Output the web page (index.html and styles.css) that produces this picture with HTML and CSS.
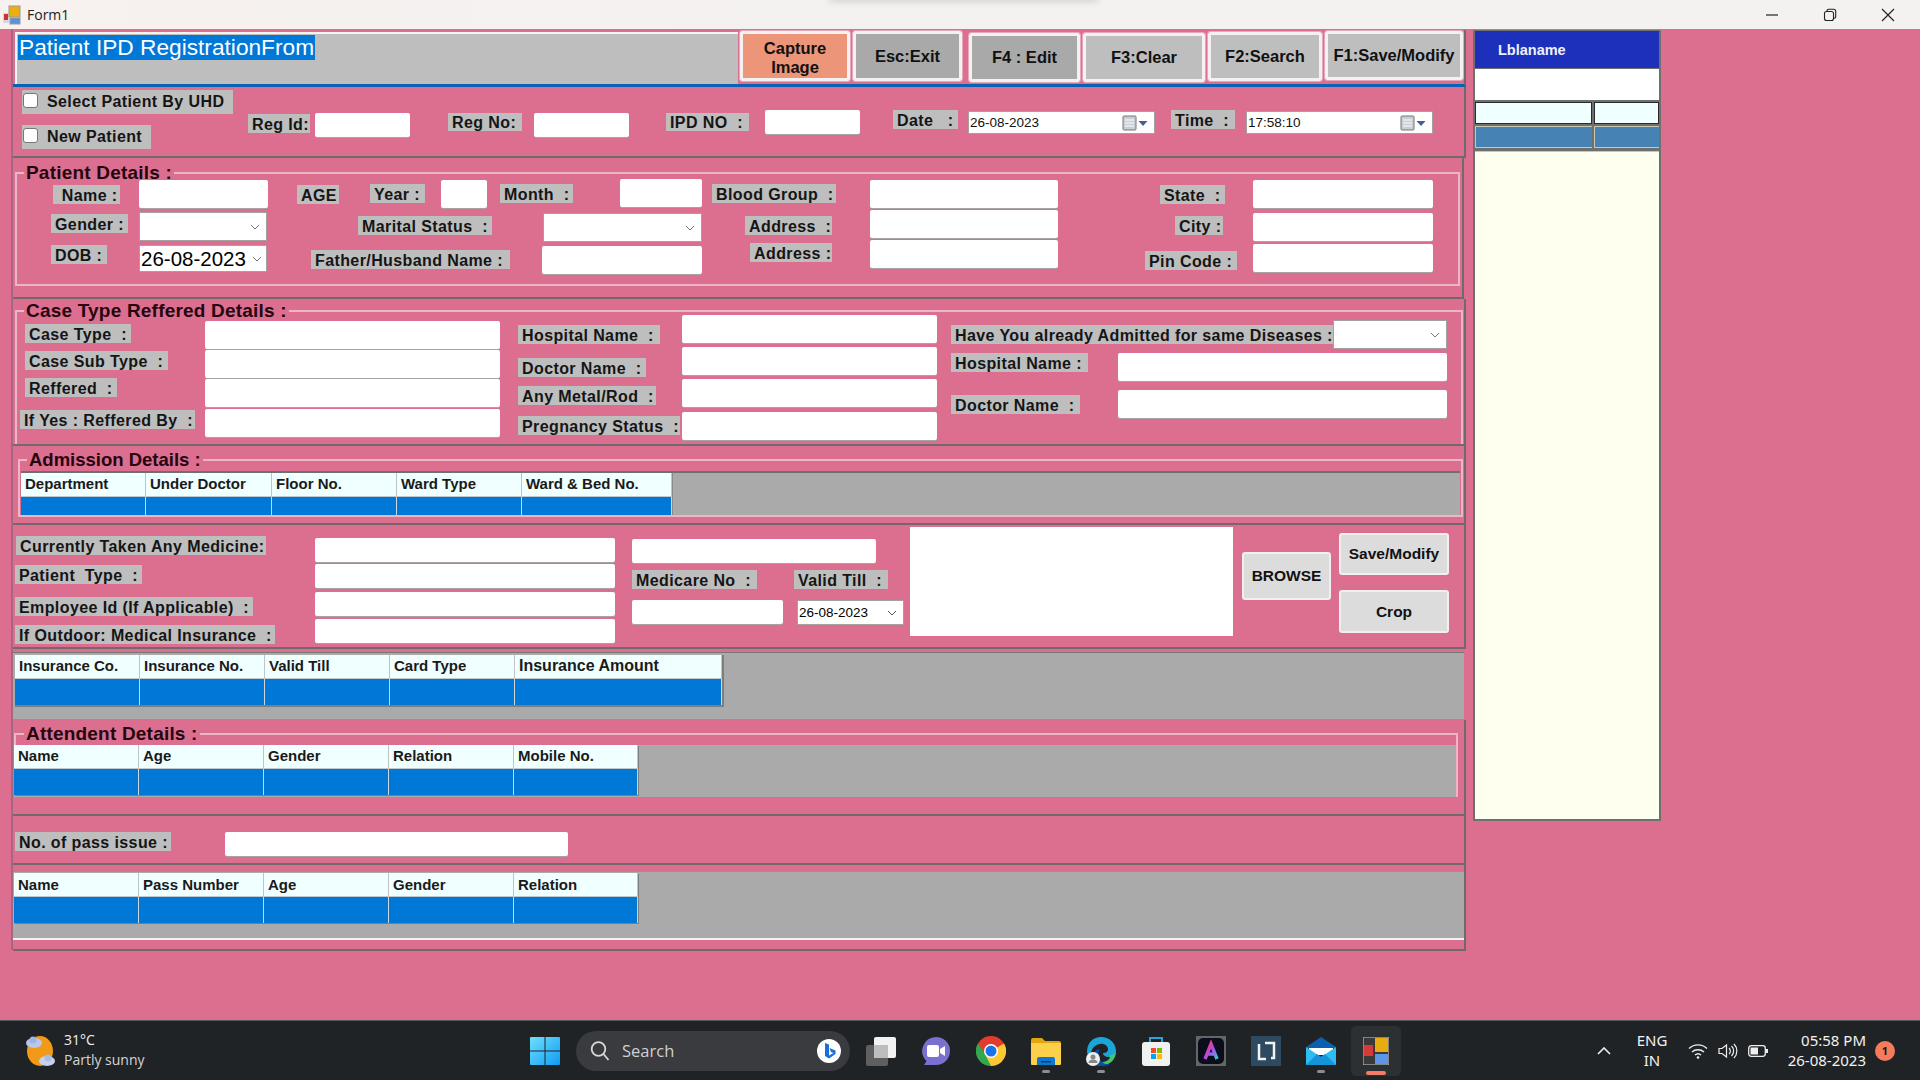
FILE: index.html
```html
<!DOCTYPE html>
<html lang="en">
<head>
<meta charset="utf-8">
<title>Form1</title>
<link rel="stylesheet" href="styles.css">
</head>
<body>
<header class="titlebar">
  <svg class="app-ico" width="18" height="20" viewBox="0 0 18 20"><rect x="0" y="8" width="6" height="10" fill="#d8d8d8"/><rect x="1" y="9" width="4" height="6" fill="#d03030"/><rect x="6" y="1" width="11" height="11" fill="#e8b010" stroke="#999"/><rect x="7" y="13" width="10" height="6" fill="#5a90e0" stroke="#999"/></svg>
  <span class="title-text">Form1</span>
  <div class="win-ctl">
    <svg width="14" height="14" viewBox="0 0 14 14"><path d="M1 7h12" stroke="#222" stroke-width="1.2"/></svg>
    <svg width="14" height="14" viewBox="0 0 14 14"><rect x="1.5" y="3.5" width="9" height="9" rx="2" fill="none" stroke="#222" stroke-width="1.1"/><path d="M4 3V2.8a1.5 1.5 0 0 1 1.5-1.5h5.2a2 2 0 0 1 2 2v5.4a1.5 1.5 0 0 1-1.5 1.5" fill="none" stroke="#222" stroke-width="1.1"/></svg>
    <svg width="14" height="14" viewBox="0 0 14 14"><path d="M1 1l12 12M13 1L1 13" stroke="#222" stroke-width="1.2"/></svg>
  </div>
</header>

<div class="form">
  <main class="main">
    <section class="head">
      <div class="head-title"><span class="selected">Patient IPD RegistrationFrom</span></div>
      <button class="btn b-capture">Capture<br>Image</button>
      <button class="btn b-exit">Esc:Exit</button>
      <button class="btn b-edit">F4 : Edit</button>
      <button class="btn b-clear">F3:Clear</button>
      <button class="btn b-search">F2:Search</button>
      <button class="btn b-save">F1:Save/Modify</button>
    </section>

    <section class="panel p-reg">
      <div class="checks">
        <label class="lbl chk-lbl t3 w211"><input type="checkbox" class="chk">Select Patient By UHD</label>
        <label class="lbl chk-lbl t11 w129"><input type="checkbox" class="chk">New Patient</label>
      </div>
      <span class="lbl t27 w62">Reg Id:</span><input class="in s t26 w95">
      <span class="lbl t26 w74 h18">Reg No:</span><input class="in s t26 w95">
      <span class="lbl t26 w83 h18">IPD NO &nbsp;:</span><input class="in s t23 w95">
      <span class="lbl t23 w65">Date &nbsp; :</span>
      <div class="dtp t24 w187"><span>26-08-2023</span><svg width="26" height="16" viewBox="0 0 26 16"><rect x="1" y="1" width="13" height="14" rx="1" fill="#c9ced4" stroke="#777"/><path d="M3 5h9M3 8h9M3 11h9" stroke="#fff"/><path d="M16.500 6h9l-4.500 5z" fill="#44608c"/></svg></div>
      <span class="lbl t23 w64">Time &nbsp;:</span>
      <div class="dtp t24 w187"><span>17:58:10</span><svg width="26" height="16" viewBox="0 0 26 16"><rect x="1" y="1" width="13" height="14" rx="1" fill="#c9ced4" stroke="#777"/><path d="M3 5h9M3 8h9M3 11h9" stroke="#fff"/><path d="M16.500 6h9l-4.500 5z" fill="#44608c"/></svg></div>
    </section>

    <section class="panel p-patient">
      <div class="group g-patient">
        <h2 class="legend">Patient Details :</h2>
        <div class="row r1">
          <span class="lbl t6 w67">&nbsp;Name :</span><input class="in t1 w129">
          <span class="lbl t6 w42">AGE</span>
          <span class="lbl t5 w55">Year :</span><input class="in t1 w46">
          <span class="lbl t5 w73">Month &nbsp;:</span><input class="in w82">
          <span class="lbl t5 w124">Blood Group &nbsp;:</span><input class="in t1 w188">
          <span class="lbl t6 w65">State &nbsp;:</span><input class="in t1 w180">
        </div>
        <div class="row r2">
          <span class="lbl t4 w77">Gender :</span>
          <div class="combo t2 w128"><svg width="10" height="6" viewBox="0 0 10 6"><path d="M1 1l4 4 4-4" fill="none" stroke="#777"/></svg></div>
          <span class="lbl t6 w134">Marital Status &nbsp;:</span>
          <div class="combo t3 w159"><svg width="10" height="6" viewBox="0 0 10 6"><path d="M1 1l4 4 4-4" fill="none" stroke="#777"/></svg></div>
          <span class="lbl t6 w87">Address &nbsp;:</span><input class="in w188">
          <span class="lbl t6 w48">City :</span><input class="in t3 w180">
        </div>
        <div class="row r3">
          <span class="lbl t5 w56">DOB :</span>
          <div class="combo dob t5 w128"><span>26-08-2023</span><svg width="10" height="6" viewBox="0 0 10 6"><path d="M1 1l4 4 4-4" fill="none" stroke="#777"/></svg></div>
          <span class="lbl t10 w199">Father/Husband Name :</span><input class="in t6 w160">
          <span class="lbl t3 w82">Address :</span><input class="in w188">
          <span class="lbl t11 w92">Pin Code :</span><input class="in t4 w180">
        </div>
      </div>
    </section>

    <section class="panel p-case">
      <div class="group g-case">
        <h2 class="legend">Case Type Reffered Details :</h2>
        <div class="case-cols">
          <div class="stack">
            <span class="lbl t12 ml5 w106">Case Type &nbsp;:</span>
            <span class="lbl t8 ml5 w143">Case Sub Type &nbsp;:</span>
            <span class="lbl t8 ml5 w92">Reffered &nbsp;:</span>
            <span class="lbl t13 w175">If Yes : Reffered By &nbsp;:</span>
          </div>
          <div class="stack">
            <input class="in t9 w295"><input class="in t1 w295"><input class="in t1 w295"><input class="in t2 w295">
          </div>
          <div class="stack">
            <span class="lbl t13 w142">Hospital Name &nbsp;:</span>
            <span class="lbl t14 w128">Doctor Name &nbsp;:</span>
            <span class="lbl t9 w138">Any Metal/Rod &nbsp;:</span>
            <span class="lbl t11 w162">Pregnancy Status &nbsp;:</span>
          </div>
          <div class="stack">
            <input class="in t3 w255"><input class="in t4 w255"><input class="in t4 w255"><input class="in t5 w255">
          </div>
          <div class="stack">
            <div class="case-row cr1"><span class="lbl t13 w382">Have You already Admitted for same Diseases :</span><div class="combo t8 w114"><svg width="10" height="6" viewBox="0 0 10 6"><path d="M1 1l4 4 4-4" fill="none" stroke="#777"/></svg></div></div>
            <div class="case-row cr2"><span class="lbl w137">Hospital Name :</span><input class="in w329 ml30"></div>
            <div class="case-row"><span class="lbl t5 w129">Doctor Name &nbsp;:</span><input class="in w329 ml38"></div>
          </div>
        </div>
      </div>
    </section>

    <section class="panel p-adm">
      <div class="group g-adm">
        <h2 class="legend">Admission Details :</h2>
        <div class="dg dg-adm">
          <div class="tbl adm-tbl">
            <div class="th">Department</div><div class="th">Under Doctor</div><div class="th">Floor No.</div><div class="th">Ward Type</div><div class="th">Ward &amp; Bed No.</div>
            <div class="td"></div><div class="td"></div><div class="td"></div><div class="td"></div><div class="td"></div>
          </div>
        </div>
      </div>
    </section>

    <section class="panel p-med">
      <div class="stack">
        <span class="lbl t11 ml1 w250">Currently Taken Any Medicine:</span>
        <span class="lbl t10 w127">Patient &nbsp;Type &nbsp;:</span>
        <span class="lbl t13 w238">Employee Id (If Applicable) &nbsp;:</span>
        <span class="lbl t9 w260">If Outdoor: Medical Insurance &nbsp;:</span>
      </div>
      <div class="stack">
        <input class="in s t13 w300"><input class="in s t2 w300"><input class="in s t4 w300"><input class="in s t3 w300">
      </div>
      <div class="stack">
        <input class="in s t14 w244">
        <div class="case-row t7"><span class="lbl w125">Medicare No &nbsp;:</span><span class="lbl w94 ml37">Valid Till &nbsp;:</span></div>
        <div class="case-row t11"><input class="in s w151"><div class="combo small ml14 w107"><span>26-08-2023</span><svg width="10" height="6" viewBox="0 0 10 6"><path d="M1 1l4 4 4-4" fill="none" stroke="#555"/></svg></div></div>
      </div>
      <div class="photo t2"></div>
      <button class="btn2 b-browse t27">BROWSE</button>
      <div class="stack">
        <button class="btn2 b-sm t8">Save/Modify</button>
        <button class="btn2 b-crop t15">Crop</button>
      </div>
    </section>

    <section class="p-ins">
      <div class="dg dg-ins">
        <div class="tbl ins-tbl">
          <div class="th">Insurance Co.</div><div class="th">Insurance No.</div><div class="th">Valid Till</div><div class="th">Card Type</div><div class="th th-lg">Insurance Amount</div>
          <div class="td"></div><div class="td"></div><div class="td"></div><div class="td"></div><div class="td"></div>
        </div>
      </div>
    </section>

    <section class="panel p-att">
      <div class="group g-att">
        <h2 class="legend">Attendent Details :</h2>
        <div class="dg dg-att">
          <div class="tbl std-tbl">
            <div class="th">Name</div><div class="th">Age</div><div class="th">Gender</div><div class="th">Relation</div><div class="th">Mobile No.</div>
            <div class="td"></div><div class="td"></div><div class="td"></div><div class="td"></div><div class="td"></div>
          </div>
        </div>
      </div>
    </section>

    <section class="panel p-pass">
      <span class="lbl t16 w156">No. of pass issue :</span>
      <input class="in s t16 w343">
    </section>

    <section class="panel p-last">
      <div class="dg dg-last">
        <div class="tbl std-tbl">
          <div class="th">Name</div><div class="th">Pass Number</div><div class="th">Age</div><div class="th">Gender</div><div class="th">Relation</div>
          <div class="td"></div><div class="td"></div><div class="td"></div><div class="td"></div><div class="td"></div>
        </div>
      </div>
    </section>
  </main>

  <aside class="side">
    <div class="side-head">Lblaname</div>
    <div class="side-white"></div>
    <div class="side-grid">
      <div class="sg-h"></div><div class="sg-h"></div>
      <div class="sg-d"></div><div class="sg-d"></div>
    </div>
    <div class="side-cream"></div>
  </aside>
</div>

<footer class="taskbar">
  <div class="weather">
    <svg width="30" height="30" viewBox="0 0 30 30"><ellipse cx="15" cy="15" rx="13" ry="15" fill="#f09a18"/><ellipse cx="9" cy="7" rx="8" ry="5" fill="#b8c8ec"/><circle cx="8" cy="4" r="3.500" fill="#9fb4e0"/><ellipse cx="22" cy="25" rx="8" ry="5" fill="#c4d2f0"/><circle cx="23" cy="22" r="3.500" fill="#a8bce4"/></svg>
    <div class="w-text"><span>31°C</span><span class="w-sub">Partly sunny</span></div>
  </div>
  <svg class="winlogo" width="30" height="30" viewBox="0 0 30 30"><defs><linearGradient id="wg" x1="0" y1="0" x2="1" y2="1"><stop offset="0" stop-color="#6fe0fa"/><stop offset="1" stop-color="#0f9bf5"/></linearGradient></defs><path d="M1 1h13.500v13.500H0V2a1 1 0 0 1 1-1zM15.500 1H29a1 1 0 0 1 1 1v12.500H15.500zM0 15.500h14.500V29H1a1 1 0 0 1-1-1zM15.500 15.500H30V28a1 1 0 0 1-1 1H15.500z" fill="url(#wg)"/></svg>
  <div class="searchbox">
    <svg width="20" height="22" viewBox="0 0 20 22"><circle cx="8.500" cy="9" r="6.800" fill="none" stroke="#d8d8d8" stroke-width="1.800"/><path d="M13.500 14l5 6" stroke="#d8d8d8" stroke-width="1.800"/></svg>
    <span>Search</span>
    <svg class="bing" width="26" height="26" viewBox="0 0 26 26"><circle cx="13" cy="13" r="12" fill="#fff"/><path d="M9 5l4 1.500v11l4.500-2.500-2.500-1-1.500-4 6 2.500v3.500L13 20.500 9 18z" fill="#1b6fd8"/></svg>
  </div>
  <div class="apps">
    <div class="app"><svg width="30" height="30" viewBox="0 0 30 30"><rect x="0" y="9" width="22" height="21" rx="2" fill="#5f5f5f"/><rect x="8" y="1" width="22" height="21" rx="2" fill="#f2f2f2"/><rect x="8" y="9" width="14" height="13" fill="#bdbdbd"/></svg></div>
    <div class="app"><svg width="30" height="30" viewBox="0 0 30 30"><path d="M15 1a14 14 0 0 1 0 28H3l2.500-4A14 14 0 0 1 15 1z" fill="#7b6fd0"/><rect x="6" y="9" width="12" height="12" rx="2" fill="#fff"/><path d="M19 13l5-3v10l-5-3z" fill="#fff"/></svg></div>
    <div class="app"><svg width="30" height="30" viewBox="0 0 30 30"><circle cx="15" cy="15" r="15" fill="#e33b2e"/><path d="M15 15l13-7.500A15 15 0 0 1 15 30L8 22z" fill="#fcc934"/><path d="M2 7.500L9 18l6 12A15 15 0 0 1 2 7.500z" fill="#2fa84f"/><circle cx="15" cy="15" r="7" fill="#fff"/><circle cx="15" cy="15" r="5.500" fill="#1a73e8"/></svg></div>
    <div class="app has-dot"><svg width="30" height="30" viewBox="0 0 30 30"><path d="M0 4a2 2 0 0 1 2-2h9l3 3h14a2 2 0 0 1 2 2v3H0z" fill="#e2a50c"/><path d="M0 7h30v21a1 1 0 0 1-1 1H1a1 1 0 0 1-1-1z" fill="#fdd04b"/><path d="M6 29v-6a2 2 0 0 1 2-2h14a2 2 0 0 1 2 2v6z" fill="#0d78d0"/><rect x="10" y="25" width="10" height="1.500" fill="#083e70"/></svg></div>
    <div class="app has-dot"><svg width="30" height="30" viewBox="0 0 30 30"><path d="M1 16C1 6 8 1 15 1c8 0 15 6 15 14 0 4-3 6-7 6s-6-2-6-4c3 0 5-1 5-4 0-3-4-6-8-5-7 1-10 7-9 14-3-2-4-4-4-7z" fill="#1ca6d8"/><path d="M30 15c0 6-3 11-8 13-4 1-7 1-9-2 4 1 12-1 11-7 3 0 6-2 6-4z" fill="#46c66c"/><path d="M5 26c0-6 3-12 9-13-2 3-2 8 1 12s7 3 9 3c-5 3-14 4-19-2z" fill="#0a4fa0"/><circle cx="7" cy="23" r="7" fill="#f0f0f0"/><circle cx="7" cy="21" r="2.500" fill="#888"/><path d="M2.500 27a4.500 3.500 0 0 1 9 0z" fill="#888"/></svg></div>
    <div class="app"><svg width="28" height="30" viewBox="0 0 28 30"><path d="M8 7V2h12v5" fill="none" stroke="#25a5d8" stroke-width="2"/><rect x="0" y="6" width="28" height="24" rx="3" fill="#f1f1f1"/><rect x="9" y="12" width="5" height="5" fill="#f25022"/><rect x="15" y="12" width="5" height="5" fill="#7fba00"/><rect x="9" y="18" width="5" height="5" fill="#00a4ef"/><rect x="15" y="18" width="5" height="5" fill="#ffb900"/></svg></div>
    <div class="app"><svg width="30" height="30" viewBox="0 0 30 30"><defs><linearGradient id="ag" x1="0" y1="0" x2="1" y2="1"><stop offset="0" stop-color="#f53a6c"/><stop offset=".5" stop-color="#b04be8"/><stop offset="1" stop-color="#2bd0c8"/></linearGradient></defs><rect width="30" height="30" fill="#666"/><rect x="2" y="2" width="26" height="26" rx="5" fill="#0a0d1c"/><path d="M9 23l6-15 6 15M11.500 18h7" fill="none" stroke="url(#ag)" stroke-width="3.500"/></svg></div>
    <div class="app"><svg width="30" height="30" viewBox="0 0 30 30"><rect width="30" height="30" fill="#2d4a60"/><path d="M8 8v15h7" fill="none" stroke="#f2f2f2" stroke-width="2.500"/><path d="M14 7h9v15h-3" fill="none" stroke="#f2f2f2" stroke-width="2.500"/></svg></div>
    <div class="app has-dot"><svg width="30" height="30" viewBox="0 0 30 30"><path d="M0 11L15 1l15 10v1H0z" fill="#0b5fb0"/><path d="M3 12h24v7H3z" fill="#fff"/><path d="M0 11l15 10 15-10v18H0z" fill="#2fbcf0"/><path d="M0 29l11-11 4 3 4-3 11 11z" fill="#1594dc"/></svg></div>
    <div class="app active"><svg width="26" height="28" viewBox="0 0 26 28"><rect x="0" y="0" width="26" height="28" fill="#3a3a3a" stroke="#ccc"/><rect x="12" y="1" width="13" height="14" fill="#e8ac10"/><rect x="12" y="17" width="13" height="10" fill="#5b96e8"/><rect x="1" y="8" width="9" height="11" fill="#d83a3a"/></svg></div>
  </div>
  <div class="tray">
    <svg class="chev" width="14" height="8" viewBox="0 0 14 8"><path d="M1 7l6-6 6 6" fill="none" stroke="#eee" stroke-width="1.600"/></svg>
    <div class="lang"><span>ENG</span><span>IN</span></div>
    <svg class="wifi" width="20" height="16" viewBox="0 0 20 16"><path d="M1 5.500a13 13 0 0 1 18 0M4 9a9 9 0 0 1 12 0M7 12a4.500 4.500 0 0 1 6 0" fill="none" stroke="#eee" stroke-width="1.400"/><circle cx="10" cy="14.500" r="1.300" fill="#eee"/></svg>
    <svg class="vol" width="20" height="16" viewBox="0 0 20 16"><path d="M1 5.500h3L8.500 2v12L4 10.500H1z" fill="none" stroke="#eee" stroke-width="1.200"/><path d="M11 5a4 4 0 0 1 0 6M13.500 3a7 7 0 0 1 0 10M16 1a10 10 0 0 1 0 14" fill="none" stroke="#eee" stroke-width="1.200"/></svg>
    <svg class="batt" width="20" height="12" viewBox="0 0 20 12"><rect x=".7" y=".7" width="16.600" height="10.600" rx="2.500" fill="none" stroke="#eee" stroke-width="1.300"/><rect x="2.500" y="2.500" width="7.500" height="7" fill="#eee"/><rect x="18" y="4" width="2" height="4" fill="#eee"/></svg>
    <div class="clock"><span>05:58 PM</span><span>26-08-2023</span></div>
    <span class="badge">1</span>
  </div>
</footer>
</body>
</html>
```

FILE: styles.css
```css
* { box-sizing: border-box; }
html, body { margin: 0; padding: 0; }
body { width: 1920px; height: 1080px; overflow: hidden; font-family: "Liberation Sans", Arial, sans-serif; background: #dc6e90; }

/* title bar */
.titlebar { position: relative; height: 29px; background: linear-gradient(90deg, #f7f1ef, #f3f2f1 50%); display: flex; align-items: center; padding-left: 3px; }
.titlebar::before { content: ""; position: absolute; left: 830px; top: -6px; width: 268px; height: 6px; box-shadow: 0 0 8px rgba(0,0,0,.22); }
.title-text { margin-left: 6px; font: 14px "Open Sans", sans-serif; color: #222; }
.win-ctl { margin-left: auto; margin-right: 25px; display: flex; gap: 44px; }

/* layout */
.form { display: flex; height: 991px; background: #dc6e90; }
.main { width: 1455px; margin-left: 11px; border-left: 2px solid #a3687f; height: 921px; padding-top: 1px; }
.panel { border-right: 2px solid #6f6a6c; border-bottom: 2px solid #6f6a6c; }

/* header */
.head { display: flex; align-items: flex-start; height: 57px; width: 1453px; border-bottom: 3px solid #0a62b5; border-right: 2px solid #6f6a6c; }
.head-title { margin: 2px 0 0 2px; width: 723px; height: 52px; background: #bebebe; border-left: 2px solid #f4f4f4; border-top: 2px solid #f4f4f4; padding: 1px; }
.selected { display: inline-block; height: 25px; line-height: 25px; padding: 0 1px; background: #0078d7; color: #fff; font-size: 22.700px; white-space: nowrap; }
.btn { border: 3px solid #f5f1f2; outline: 1px solid #e6a9bc; border-radius: 2px; background: #bebebe; color: #111; font: bold 16.500px/23px "Liberation Sans", sans-serif; padding: 0; height: 49px; white-space: nowrap; }
.b-capture { margin: 1px 0 0 2px; width: 110px; height: 50px; background: #ec9578; line-height: 19px; padding-top: 3px; }
.b-exit { margin: 1px 0 0 3px; width: 109px; height: 50px; background: #a9a9a9; }
.b-edit { margin: 3px 0 0 7px; width: 111px; background: #a9a9a9; }
.b-clear { margin: 3px 0 0 3px; width: 122px; }
.b-search { margin: 2px 0 0 3px; width: 114px; }
.b-save { margin: 1px 0 0 3px; width: 138px; }

/* generic controls */
.lbl { display: block; height: 19px; line-height: 21px; background: #bebebe; color: #151515; font-weight: bold; font-size: 16px; letter-spacing: .4px; padding-left: 4px; white-space: nowrap; overflow: hidden; flex: none; }
.h18 { height: 18px; line-height: 19px; }
.in { display: block; position: relative; height: 28px; background: #fff; border: 0; border-radius: 2px; box-shadow: 0 1px 0 #a9a1a4; padding: 0; flex: none; }
.in.s { height: 24px; }
.combo { display: flex; align-items: center; justify-content: flex-end; height: 29px; background: #fff; border: 1px solid #a5a0a2; padding-right: 6px; flex: none; }
.combo span { margin-right: auto; margin-left: 1px; font-size: 20.500px; color: #000; white-space: nowrap; }
.dob { height: 27px; padding-right: 4px; }
.combo.small { height: 25px; }
.combo.small span { font-size: 13.500px; }
.dtp { display: flex; align-items: center; justify-content: space-between; height: 23px; background: #fff; border: 1px solid #a5a0a2; padding: 0 6px 0 1px; font-size: 13.500px; color: #111; }
.chk-lbl { height: 24px; line-height: 24px; display: flex; align-items: center; padding-left: 1px; }
.chk { appearance: none; width: 15px; height: 15px; margin: 0 9px 4px 0; background: #fff; border: 1px solid #777; border-radius: 3px; }

.t1 { margin-top: 1px; } .t2 { margin-top: 2px; } .t3 { margin-top: 3px; } .t4 { margin-top: 4px; } .t5 { margin-top: 5px; }
.t6 { margin-top: 6px; } .t7 { margin-top: 7px; } .t8 { margin-top: 8px; } .t9 { margin-top: 9px; } .t10 { margin-top: 10px; }
.t11 { margin-top: 11px; } .t12 { margin-top: 12px; } .t13 { margin-top: 13px; } .t14 { margin-top: 14px; } .t15 { margin-top: 15px; }
.t16 { margin-top: 16px; } .t23 { margin-top: 23px; } .t24 { margin-top: 24px; } .t26 { margin-top: 26px; } .t27 { margin-top: 27px; }
.ml1 { margin-left: 1px; } .ml5 { margin-left: 5px; } .ml14 { margin-left: 14px; } .ml30 { margin-left: 30px; } .ml37 { margin-left: 37px; } .ml38 { margin-left: 38px; }
.w42 { width: 42px; } .w46 { width: 46px; } .w48 { width: 48px; } .w55 { width: 55px; } .w56 { width: 56px; } .w62 { width: 62px; } .w64 { width: 64px; } .w65 { width: 65px; }
.w67 { width: 67px; } .w73 { width: 73px; } .w74 { width: 74px; } .w77 { width: 77px; } .w82 { width: 82px; } .w83 { width: 83px; } .w87 { width: 87px; } .w92 { width: 92px; }
.w94 { width: 94px; } .w95 { width: 95px; } .w106 { width: 106px; } .w107 { width: 107px; } .w114 { width: 114px; } .w124 { width: 124px; } .w125 { width: 125px; } .w127 { width: 127px; }
.w128 { width: 128px; } .w129 { width: 129px; } .w134 { width: 134px; } .w137 { width: 137px; } .w138 { width: 138px; } .w142 { width: 142px; } .w143 { width: 143px; } .w151 { width: 151px; }
.w156 { width: 156px; } .w159 { width: 159px; } .w160 { width: 160px; } .w162 { width: 162px; } .w175 { width: 175px; } .w180 { width: 180px; } .w187 { width: 187px; } .w188 { width: 188px; }
.w199 { width: 199px; } .w211 { width: 211px; } .w238 { width: 238px; } .w244 { width: 244px; } .w250 { width: 250px; } .w255 { width: 255px; } .w260 { width: 260px; } .w295 { width: 295px; }
.w300 { width: 300px; } .w329 { width: 329px; } .w343 { width: 343px; } .w382 { width: 382px; }

/* group boxes */
.group { position: relative; border: 2px solid #ecb6c7; }
.legend { position: absolute; margin: 0; padding: 0 2px; background: #dc6e90; color: #25060f; font-size: 19px; letter-spacing: .2px; line-height: 18px; font-weight: bold; white-space: nowrap; top: -10px; left: 7px; }
.row { display: grid; align-items: start; }
.stack { display: flex; flex-direction: column; align-items: flex-start; }
.case-row { display: flex; align-items: flex-start; }

/* registration strip */
.p-reg { display: grid; align-items: start; height: 71px; padding-left: 9px; grid-template-columns: 226px 67px 133px 86px 132px 99px 128px 75px 203px 75px 1fr; }

/* patient details */
.p-patient { height: 141px; margin-right: 2px; padding: 14px 0 0 2px; }
.g-patient { width: 1445px; height: 114px; padding-top: 5px; }
.r1 { height: 31px; padding-left: 36px; grid-template-columns: 86px 158px 73px 71px 59px 120px 92px 158px 290px 93px 1fr; }
.r2 { height: 30px; padding-left: 34px; grid-template-columns: 88px 219px 185px 202px 125px 305px 78px 1fr; }
.r3 { height: 34px; padding-left: 34px; grid-template-columns: 88px 172px 231px 208px 120px 275px 108px 1fr; }

/* case type */
.p-case { height: 147px; padding: 11px 0 0 2px; }
.g-case { width: 1448px; height: 134px; border-bottom: 0; }
.case-cols { display: grid; padding-left: 3px; grid-template-columns: 185px 313px 164px 269px 1fr; }
.cr1 { height: 41px; }
.cr2 { height: 37px; }

/* admission */
.p-adm { height: 79px; padding: 13px 0 0 5px; }
.g-adm { width: 1445px; height: 58px; padding: 10px 0 0 1px; }
.g-adm .legend { font-size: 18.500px; letter-spacing: 0; }
.dg { background: #aaaaaa; }
.dg-adm { width: 1439px; height: 44px; border-top: 2px solid #6f6f6f; }
.tbl { display: grid; grid-template-rows: 24px 1fr; width: fit-content; }
.adm-tbl { grid-template-columns: 125px 126px 125px 125px 150px; height: 42px; box-shadow: 1px 0 0 #8a8a8a; }
.th { background: #f0ffff; color: #1a1a1a; font-weight: bold; font-size: 15px; line-height: 21px; padding-left: 4px; border-right: 1px solid #bfc5c5; border-bottom: 1px solid #c3c9c9; white-space: nowrap; overflow: hidden; }
.td { background: #0078d7; border-right: 1px solid #cfd6da; }
.th-lg { font-size: 16px; line-height: 22px; }

/* medicine */
.p-med { display: grid; align-items: start; height: 124px; padding-left: 2px; grid-template-columns: 300px 317px 278px 332px 97px 1fr; }
.photo { width: 323px; height: 109px; background: #fff; }
.btn2 { background: #dcdcdc; color: #111; font: bold 15.500px "Liberation Sans", sans-serif; border: 2px solid #f3eff0; border-radius: 3px; padding: 0; }
.b-browse { width: 89px; height: 48px; }
.b-sm { width: 110px; height: 42px; }
.b-crop { width: 110px; height: 43px; }

/* insurance grid */
.p-ins { height: 71px; width: 1451px; padding-top: 3px; }
.dg-ins { height: 67px; padding: 2px 0 0 2px; border-top: 1px solid #777; }
.ins-tbl { grid-template-columns: 125px 125px 125px 125px 207px; height: 50px; box-shadow: 1px 1px 0 1px #7e7e7e; }

/* attendent */
.p-att { height: 96px; padding: 13px 0 0 1px; }
.g-att { width: 1444px; height: 64px; border-bottom: 0; padding-top: 10px; }
.dg-att { height: 52px; margin-left: -2px; width: 1442px; }
.g-att .legend { left: 8px; }
.std-tbl { grid-template-columns: 125px 125px 125px 125px 124px; height: 50px; box-shadow: 1px 1px 0 #7e7e7e; }

/* pass */
.p-pass { display: grid; align-items: start; height: 49px; padding-left: 2px; grid-template-columns: 210px 1fr; }
.p-last { height: 86px; padding-top: 7px; }
.dg-last { height: 68px; width: 1451px; padding: 1px 0 0 1px; border-bottom: 2px solid #f7f3f4; }
.dg-last .th { line-height: 23px; }

/* sidebar */
.side { width: 188px; height: 791px; margin: 1px 0 0 7px; display: flex; flex-direction: column; border: 2px solid #6f6f6f; border-top-width: 1px; background: #6f6f6f; }
.side-head { height: 37px; background: #1c30bb; color: #eef2ff; font-weight: bold; font-size: 14.500px; line-height: 38px; padding-left: 23px; }
.side-white { height: 31px; margin-top: 1px; background: #fff; }
.side-grid { display: grid; grid-template-columns: 117px 1fr; grid-auto-rows: 24px; column-gap: 2px; padding: 2px 0 0; height: 51px; }
.sg-h { background: #f0ffff; border: 1px solid #2a2a2a; height: 22px; }
.sg-d { background: #4682b4; border: 2px solid #c9c9b2; border-width: 1px 0 1px 1px; height: 22px; }
.side-cream { flex: 1; background: #fffff0; border-top: 1px solid #c9c9b2; }

/* taskbar */
.taskbar { display: flex; align-items: center; height: 60px; background: #202326; border-top: 1px solid #565a5e; color: #fff; font-family: "Open Sans", "Noto Sans", sans-serif; }
.weather { display: flex; align-items: center; width: 505px; margin-left: 25px; }
.w-text { display: flex; flex-direction: column; margin: -2px 0 0 9px; font-size: 14px; line-height: 20px; color: #f2f2f2; }
.w-sub { color: #d4d4d4; font-size: 14px; }
.winlogo { flex: none; }
.searchbox { display: flex; align-items: center; width: 274px; height: 40px; margin-left: 16px; background: #393b3e; border-radius: 20px; padding: 0 8px 0 14px; color: #d0d0d0; font-size: 16.500px; }
.searchbox span { margin-left: 12px; }
.bing { margin-left: auto; }
.apps { display: flex; align-items: center; gap: 25px; margin-left: 16px; }
.app { position: relative; width: 30px; height: 30px; display: flex; justify-content: center; align-items: center; }
.has-dot::after { content: ""; position: absolute; left: 11px; top: 34px; width: 8px; height: 3px; border-radius: 2px; background: #8b8e91; }
.active { background: #2d3033; width: 50px; height: 50px; margin: 0 -10px; border-radius: 5px; }
.active::after { content: ""; position: absolute; left: 15px; top: 45px; width: 20px; height: 4px; border-radius: 2px; background: #f47c64; }
.tray { display: flex; align-items: center; margin-left: auto; padding-right: 25px; font-family: "Noto Sans", "Open Sans", sans-serif; font-size: 15px; color: #f2f2f2; }
.lang { display: flex; flex-direction: column; align-items: center; width: 30px; margin: -2px 1px 0 26px; line-height: 20px; }
.wifi { margin-left: 20px; } .vol { margin-left: 10px; } .batt { margin-left: 10px; }
.clock { display: flex; flex-direction: column; align-items: flex-end; width: 80px; margin: -2px 0 0 18px; line-height: 20px; white-space: nowrap; }
.badge { width: 20px; height: 20px; margin-left: 9px; border-radius: 50%; background: #f47c5c; color: #2a1410; font-size: 11px; font-weight: bold; line-height: 20px; text-align: center; }
```
